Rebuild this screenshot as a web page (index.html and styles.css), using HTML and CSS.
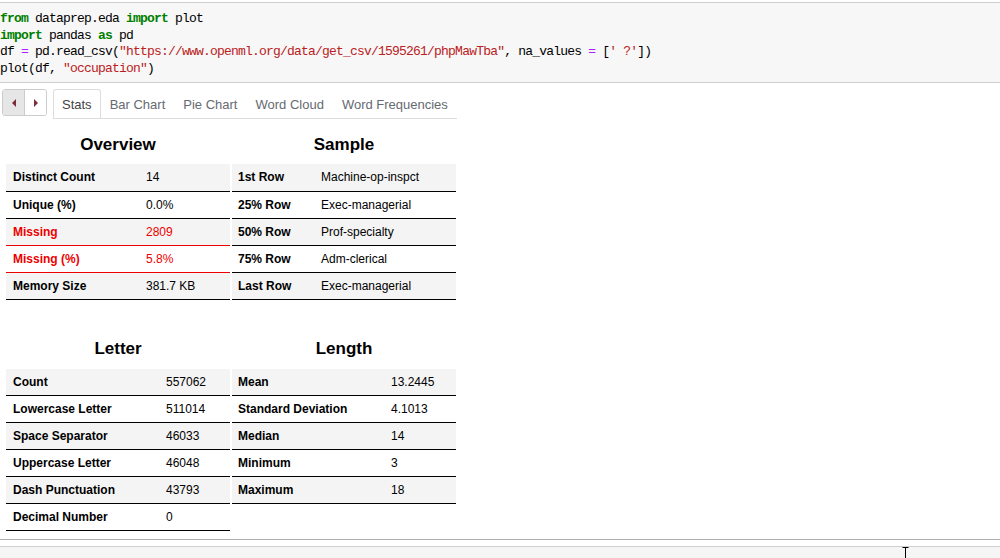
FILE: index.html
```html
<!DOCTYPE html>
<html>
<head>
<meta charset="utf-8">
<link rel="stylesheet" href="styles.css">
</head>
<body>
<div class="code-cell">
<pre class="code"><span class="kw">from</span> dataprep.eda <span class="kw">import</span> plot
<span class="kw">import</span> pandas <span class="kw">as</span> pd
df <span class="op">=</span> pd.read_csv(<span class="str">"https://www.openml.org/data/get_csv/1595261/phpMawTba"</span>, na_values <span class="op">=</span> [<span class="str">' ?'</span>])
plot(df, <span class="str">"occupation"</span>)</pre>
</div>

<div class="output">
  <div class="tabbar">
    <div class="nav">
      <span class="nav-btn nav-prev"><svg width="6" height="8" viewBox="0 0 6 8"><path d="M5 0 L1 4 L5 8 Z" fill="#7a2f3a"/></svg></span>
      <span class="nav-btn nav-next"><svg width="6" height="8" viewBox="0 0 6 8"><path d="M1 0 L5 4 L1 8 Z" fill="#7a2f3a"/></svg></span>
    </div>
    <div class="tabs">
      <span class="tab active">Stats</span>
      <span class="tab">Bar Chart</span>
      <span class="tab">Pie Chart</span>
      <span class="tab">Word Cloud</span>
      <span class="tab">Word Frequencies</span>
    </div>
  </div>

  <div class="grid">
    <section class="block">
      <h3>Overview</h3>
      <table class="stats t-overview">
        <tr><td>Distinct Count</td><td>14</td></tr>
        <tr><td>Unique (%)</td><td>0.0%</td></tr>
        <tr class="warn"><td>Missing</td><td>2809</td></tr>
        <tr class="warn"><td>Missing (%)</td><td>5.8%</td></tr>
        <tr><td>Memory Size</td><td>381.7 KB</td></tr>
      </table>
    </section>
    <section class="block">
      <h3>Sample</h3>
      <table class="stats t-sample">
        <tr><td>1st Row</td><td>Machine-op-inspct</td></tr>
        <tr><td>25% Row</td><td>Exec-managerial</td></tr>
        <tr><td>50% Row</td><td>Prof-specialty</td></tr>
        <tr><td>75% Row</td><td>Adm-clerical</td></tr>
        <tr><td>Last Row</td><td>Exec-managerial</td></tr>
      </table>
    </section>
    <section class="block second">
      <h3>Letter</h3>
      <table class="stats t-letter">
        <tr><td>Count</td><td>557062</td></tr>
        <tr><td>Lowercase Letter</td><td>511014</td></tr>
        <tr><td>Space Separator</td><td>46033</td></tr>
        <tr><td>Uppercase Letter</td><td>46048</td></tr>
        <tr><td>Dash Punctuation</td><td>43793</td></tr>
        <tr><td>Decimal Number</td><td>0</td></tr>
      </table>
    </section>
    <section class="block second">
      <h3>Length</h3>
      <table class="stats t-length">
        <tr><td>Mean</td><td>13.2445</td></tr>
        <tr><td>Standard Deviation</td><td>4.1013</td></tr>
        <tr><td>Median</td><td>14</td></tr>
        <tr><td>Minimum</td><td>3</td></tr>
        <tr><td>Maximum</td><td>18</td></tr>
      </table>
    </section>
  </div>
</div>

<div class="footer">
  <div class="footer-cell"></div>
</div>
<svg class="cursor" width="7" height="11" viewBox="0 0 7 11"><path d="M0.5 0.5 H6.5 M3.5 0.5 V11" stroke="#000" stroke-width="1" fill="none"/></svg>
</body>
</html>
```

FILE: styles.css
```css
html, body {
  margin: 0;
  padding: 0;
  background: #fff;
}

body {
  position: relative;
  height: 558px;
  overflow: hidden;
  font-family: "Liberation Sans", Arial, sans-serif;
  color: #000;
}

.code-cell {
  margin-top: 2px;
  background: #f7f7f7;
  border-top: 1px solid #cfcfcf;
  border-bottom: 1px solid #cfcfcf;
}

.code {
  margin: 0;
  padding: 8px 0 5px 0;
  font-family: "Liberation Mono", "Courier New", monospace;
  font-size: 13px;
  letter-spacing: -0.8px;
  line-height: 16.7px;
  height: 66px;
  color: #000;
}

.kw {
  color: #008000;
  font-weight: bold;
}

.str {
  color: #ba2121;
}

.op {
  color: #aa22ff;
}

.output {
  margin-top: 6px;
}

.tabbar {
  display: flex;
  align-items: flex-start;
  padding-left: 2px;
}

.nav {
  display: flex;
  width: 45px;
  height: 27px;
  box-sizing: border-box;
  border: 1px solid #cccccc;
  border-radius: 3px;
  overflow: hidden;
  margin-right: 6px;
}

.nav-btn {
  flex: 1;
  display: flex;
  align-items: center;
  justify-content: center;
}

.nav-prev {
  background: #e6e6e6;
  border-right: 1px solid #cccccc;
}

.nav-next {
  background: #fff;
}

.tabs {
  display: flex;
  border-bottom: 1px solid #dddddd;
  height: 29px;
}

.tab {
  display: flex;
  align-items: center;
  height: 29px;
  box-sizing: border-box;
  padding: 1px 8px 0 8px;
  border: 1px solid transparent;
  border-bottom: none;
  font-size: 13px;
  color: #666a70;
}

.tab.active {
  border-color: #dddddd;
  border-radius: 3px 3px 0 0;
  color: #444;
  background: #fff;
}

.grid {
  display: grid;
  grid-template-columns: 224px 224px;
  column-gap: 2px;
  padding-left: 6px;
}

.block h3 {
  margin: 16px 0 9px 0;
  height: 20px;
  line-height: 20px;
  text-align: center;
  font-size: 17px;
  font-weight: bold;
}

.block.second h3 {
  margin-top: 39px;
  margin-bottom: 10px;
}

.stats {
  width: 224px;
  border-collapse: collapse;
  table-layout: fixed;
  font-size: 12px;
}

.stats tr {
  height: 27px;
  border-bottom: 1px solid #000;
}

.stats tr:nth-child(odd) {
  background: #f4f4f4;
}

.stats td {
  padding: 0 0 0 7px;
  vertical-align: middle;
  white-space: nowrap;
  overflow: hidden;
}

.stats td:first-child {
  font-weight: bold;
}

.t-sample td:first-child,
.t-length td:first-child {
  padding-left: 6px;
}

.t-overview td:first-child { width: 126px; }
.t-sample td:first-child { width: 76px; }
.t-letter td:first-child { width: 146px; }
.t-length td:first-child { width: 146px; }

.stats tr.warn {
  color: #ee0000;
  border-bottom-color: #ee0000;
}

.stats tr.warn td:first-child {
  color: #ee0000;
}

.footer {
  margin-top: 8px;
  border-top: 1px solid #b0b0b0;
  padding-top: 6px;
}

.footer-cell {
  border-top: 1px solid #cfcfcf;
  background: #f5f5f5;
  height: 20px;
}

.cursor {
  position: absolute;
  left: 902px;
  top: 547px;
}
```
